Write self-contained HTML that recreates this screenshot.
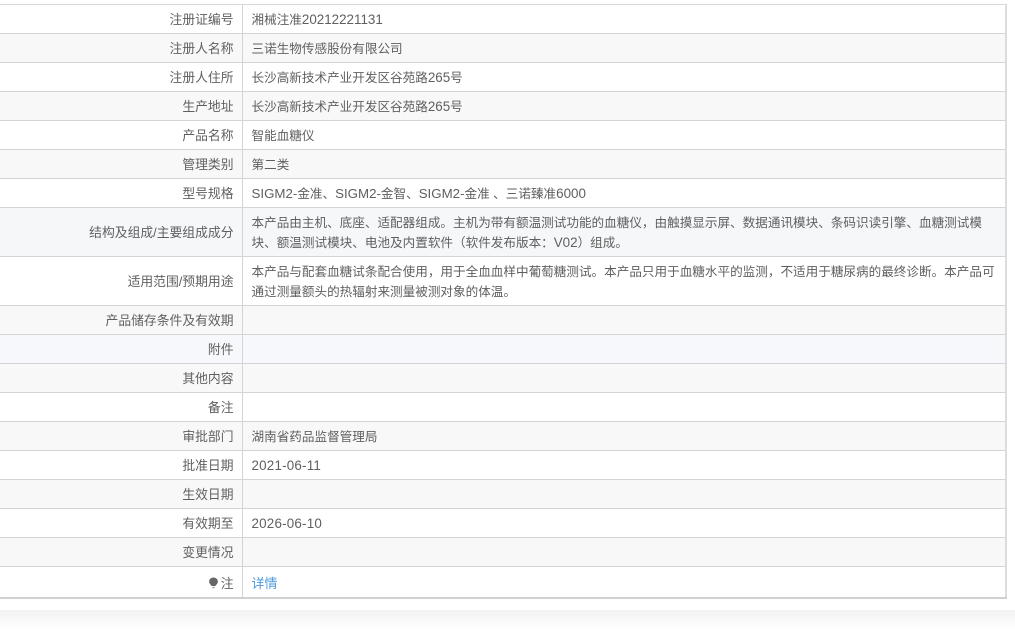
<!DOCTYPE html>
<html lang="zh-CN"><head><meta charset="utf-8"><style>
html,body{margin:0;padding:0;background:#fff;width:1015px;height:630px;overflow:hidden}
body{position:relative;font-family:"Liberation Sans","Noto Sans CJK SC",sans-serif;font-size:12.6px;color:#5f5f5f}
.shadow{position:absolute;left:0;top:610px;width:1015px;height:20px;background:linear-gradient(#f3f3f3,#fff)}
table{position:absolute;left:-1px;top:4px;width:1008px;border-collapse:collapse;table-layout:fixed;border-top:1px solid #d8d8d8;border-right:2px solid #dcdcdc;border-bottom:2px solid #d0d0d0}
col.a{width:243px}
td{border-top:1px solid #d4d4d4;padding:1px 9px 0;height:27px;line-height:20px;vertical-align:middle;box-sizing:content-box;white-space:nowrap}
tr:first-child td{border-top:0}
td:first-child{text-align:right;border-right:1px solid #d4d4d4;padding-right:8px;font-size:12.8px}
tr:nth-child(even) td{background:#f8f8f8}
tr.tall td{height:47px}
tr.tb td{background:#f6f7f9!important}
tr.b td{background:#f6f8fb!important}
tr.last td{height:27px;padding-top:3px;background:#fff}
span.l{font-size:13.4px}
span.s{font-size:13.3px}
span.d{font-size:13.4px;letter-spacing:.2px}
a{color:#4a9ade;text-decoration:none;font-size:13px}
svg{vertical-align:-1px;margin-right:1px;position:relative;left:-1px}
</style></head><body>
<table><colgroup><col class="a"><col></colgroup>
<tr><td>注册证编号</td><td>湘械注准<span class="l">20212221131</span></td></tr>
<tr><td>注册人名称</td><td>三诺生物传感股份有限公司</td></tr>
<tr><td>注册人住所</td><td>长沙高新技术产业开发区谷苑路<span class="l">265</span>号</td></tr>
<tr><td>生产地址</td><td>长沙高新技术产业开发区谷苑路<span class="l">265</span>号</td></tr>
<tr><td>产品名称</td><td>智能血糖仪</td></tr>
<tr><td>管理类别</td><td>第二类</td></tr>
<tr><td>型号规格</td><td><span class="s">SIGM2-</span>金准、<span class="s">SIGM2-</span>金智、<span class="s">SIGM2-</span>金准 、三诺臻准<span class="l">6000</span></td></tr>
<tr class="tall tb"><td>结构及组成/主要组成成分</td><td>本产品由主机、底座、适配器组成。主机为带有额温测试功能的血糖仪，由触摸显示屏、数据通讯模块、条码识读引擎、血糖测试模<br>块、额温测试模块、电池及内置软件（软件发布版本：<span class="l">V02</span>）组成。</td></tr>
<tr class="tall"><td>适用范围/预期用途</td><td>本产品与配套血糖试条配合使用，用于全血血样中葡萄糖测试。本产品只用于血糖水平的监测，不适用于糖尿病的最终诊断。本产品可<br>通过测量额头的热辐射来测量被测对象的体温。</td></tr>
<tr><td>产品储存条件及有效期</td><td></td></tr>
<tr class="b"><td>附件</td><td></td></tr>
<tr><td>其他内容</td><td></td></tr>
<tr><td style="background:#fff">备注</td><td style="background:#fff"></td></tr>
<tr><td>审批部门</td><td>湖南省药品监督管理局</td></tr>
<tr><td>批准日期</td><td><span class="d">2021-06-11</span></td></tr>
<tr><td>生效日期</td><td></td></tr>
<tr><td>有效期至</td><td><span class="d">2026-06-10</span></td></tr>
<tr><td>变更情况</td><td></td></tr>
<tr class="last"><td><svg width="11" height="12" viewBox="0 0 10 11"><path d="M5 0.5C2.6 0.5 1 2.2 1 4.2C1 6 2.6 7 3.4 8.3H6.6C7.4 7 9 6 9 4.2C9 2.2 7.4 0.5 5 0.5Z" fill="#666"/><rect x="3.8" y="9" width="2.4" height="1.3" fill="#aaa"/></svg>注</td><td><a href="#">详情</a></td></tr>
</table>
<div class="shadow"></div>
</body></html>
